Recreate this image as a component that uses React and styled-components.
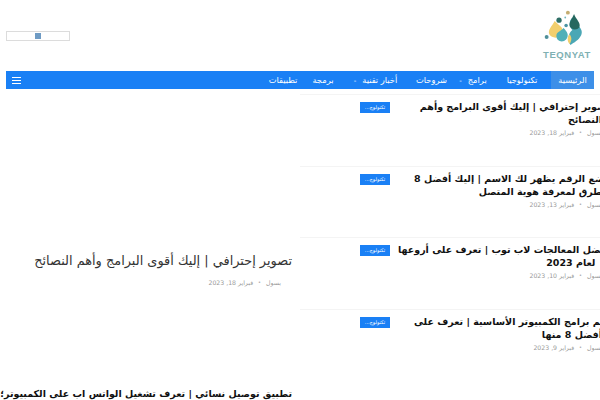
import styled, { createGlobalStyle } from 'styled-components';

const GlobalStyle = createGlobalStyle`
  html, body {
    margin: 0;
    padding: 0;
    background: #fff;
    overflow: hidden;
    width: 600px;
    height: 400px;
  }
  body {
    font-family: "DejaVu Sans", "Liberation Sans", sans-serif;
  }
`;

const navItems = [
  { label: 'الرئيسية', active: true, width: 43 },
  { label: 'تكنولوجيا', width: 58 },
  { label: 'برامج', arrow: true, width: 40 },
  { label: 'شروحات', width: 43 },
  { label: 'أخبار تقنية', arrow: true, width: 69 },
  { label: 'برمجة', width: 36 },
  { label: 'تطبيقات', width: 44 },
];

const posts = [
  { lines: ['تصوير إحترافي | إليك أقوى البرامج وأهم', 'النصائح'], date: 'فبراير 18, 2023' },
  { lines: ['وضع الرقم يظهر لك الاسم | إليك أفضل 8', 'طرق لمعرفة هوية المتصل'], date: 'فبراير 13, 2023' },
  { lines: ['أفضل المعالجات لاب توب | تعرف على أروعها', '\u00a0\u00a0لعام 2023'], date: 'فبراير 10, 2023' },
  { lines: ['أهم برامج الكمبيوتر الأساسية | تعرف على', 'أفضل 8 منها'], date: 'فبراير 9, 2023' },
];

const Logo = () => (
  <LogoBox>
    <svg width="46" height="38" viewBox="0 0 52 42">
      <path d="M12 12 C18 18 24 20 20 27 C17 32 9 32 6 27 C4 22 9 18 12 12Z" fill="#f2cf6d" />
      <path d="M32 8 C34 15 46 20 42 28 C39 34 34 36 30 39 C26 34 27 26 32 22 C28 18 28 12 32 8Z" fill="#4ba7b5" />
      <path d="M34 4 C36 10 42 14 40 19 C37 23 31 22 29 18 C28 13 32 9 34 4Z" fill="#25685f" />
      <path d="M22 20 C26 24 29 28 25 33 C21 37 14 35 14 29 C14 24 19 24 22 20Z" fill="#4fb0b8" />
      <path d="M29 27 C31 30 32 33 29 38 C26 35 26 30 29 27Z" fill="#f2cf6d" />
      <circle cx="17" cy="11" r="3" fill="#2f6f66" />
      <circle cx="27" cy="2.5" r="2.2" fill="#c4ad72" />
      <circle cx="25" cy="17" r="2" fill="#4a93a3" />
      <circle cx="3" cy="30" r="2.2" fill="#4f8f99" />
      <circle cx="24" cy="8" r="1" fill="#6fb6bd" />
    </svg>
    <LogoText>TEQNYAT</LogoText>
  </LogoBox>
);

const Post = ({ lines, date }) => (
  <PostRow>
    <PostBody>
      <PostTitle>
        <FirstLine>{lines[0]}</FirstLine>
        <SecondLine>{lines[1]}</SecondLine>
      </PostTitle>
      <Meta>
        <span>بسول</span>
        <Dot>•</Dot>
        <span>{date}</span>
      </Meta>
    </PostBody>
    <Badge>تكنولوج...</Badge>
  </PostRow>
);

export default function App() {
  return (
    <Page dir="rtl">
      <GlobalStyle />
      <Header>
        <Logo />
        <SearchBox>
          <SearchButton />
        </SearchBox>
      </Header>
      <Nav>
        {navItems.map((item) => (
          <NavItem key={item.label} $active={item.active} $width={item.width}>
            {item.label}
            {item.arrow && <Arrow>-</Arrow>}
          </NavItem>
        ))}
        <Burger>
          <i />
          <i />
          <i />
        </Burger>
      </Nav>
      <Columns>
        <PostList>
          {posts.map((p) => (
            <Post key={p.date} {...p} />
          ))}
        </PostList>
        <Featured>
          <FeaturedItem>
            <FeaturedTitle>تصوير إحترافي | إليك أقوى البرامج وأهم النصائح</FeaturedTitle>
            <Meta $inset>
              <span>بسول</span>
              <Dot>•</Dot>
              <span>فبراير 18, 2023</span>
            </Meta>
          </FeaturedItem>
          <SecondTitle>تطبيق توصيل نسائي | تعرف تشغيل الواتس اب على الكمبيوتر؛ إليك أفضل 5 طرق للتشغيل</SecondTitle>
        </Featured>
      </Columns>
    </Page>
  );
}

const Page = styled.div`
  width: 600px;
  height: 400px;
  overflow: hidden;
  background: #fff;
`;

const Header = styled.header`
  height: 71px;
  padding: 0 8px 0 6px;
  box-sizing: border-box;
  display: flex;
  align-items: flex-start;
  justify-content: space-between;
`;

const LogoBox = styled.div`
  width: 50px;
  margin-top: 10px;
  display: flex;
  flex-direction: column;
  align-items: center;
`;

const LogoText = styled.div`
  direction: ltr;
  font-family: "Liberation Sans", sans-serif;
  font-size: 9.5px;
  line-height: 9px;
  font-weight: 700;
  letter-spacing: 0.6px;
  color: #7fb1b3;
  margin-top: 2px;
`;

const SearchBox = styled.div`
  width: 64px;
  height: 10px;
  margin-top: 31px;
  border: 1px solid #dcdcdc;
  box-sizing: border-box;
  display: flex;
  justify-content: center;
`;

const SearchButton = styled.div`
  width: 6px;
  height: 6px;
  margin-top: 1px;
  background: #6f9bc4;
`;

const Nav = styled.nav`
  margin: 0 6px;
  height: 18px;
  background: #1a80f5;
  display: flex;
  align-items: stretch;
`;

const NavItem = styled.div`
  width: ${(p) => p.$width}px;
  background: ${(p) => (p.$active ? '#3d8fe8' : 'transparent')};
  color: #fff;
  font-size: 8.3px;
  line-height: 18px;
  text-align: center;
  white-space: nowrap;
`;

const Arrow = styled.span`
  font-size: 7px;
  margin-right: 6px;
`;

const Burger = styled.div`
  margin-right: auto;
  margin-left: 6px;
  display: flex;
  flex-direction: column;
  justify-content: center;
  gap: 2px;

  i {
    display: block;
    width: 9px;
    height: 1px;
    background: #fff;
  }
`;

const Columns = styled.main`
  display: flex;
  align-items: flex-start;
  height: 311px;
`;

const PostList = styled.section`
  flex: 0 0 302px;
  margin-right: -2px;
  margin-top: 5px;
`;

const PostRow = styled.article`
  height: 71.6px;
  box-sizing: border-box;
  border-top: 1px solid #f4f4f4;
  padding: 5px 0 0 60px;
  display: flex;
  justify-content: space-between;
  align-items: flex-start;
`;

const PostBody = styled.div`
  width: 204px;
`;

const PostTitle = styled.h3`
  margin: 0;
  font-size: 9.5px;
  line-height: 13px;
  font-weight: 700;
  color: #111;
  white-space: nowrap;
`;

const FirstLine = styled.div`
  margin-right: -8px;
`;

const SecondLine = styled.div`
  white-space: pre;
`;

const Meta = styled.div`
  margin-top: ${(p) => (p.$inset ? '8px' : '2px')};
  margin-right: ${(p) => (p.$inset ? '11px' : '0')};
  display: flex;
  gap: 5px;
  font-size: 6.2px;
  line-height: 9px;
  color: #999;
`;

const Dot = styled.span`
  font-size: 5px;
`;

const Badge = styled.div`
  flex: none;
  width: 30px;
  height: 11px;
  margin-top: 2px;
  background: #1a80f5;
  color: #fff;
  font-size: 5px;
  line-height: 11px;
  text-align: center;
  overflow: hidden;
  white-space: nowrap;
`;

const Featured = styled.section`
  flex: 1;
  padding-right: 8px;
  min-width: 0;
`;

const FeaturedItem = styled.div`
  padding-top: 163px;
`;

const FeaturedTitle = styled.h2`
  margin: 0;
  font-size: 12.9px;
  line-height: 18px;
  font-weight: 400;
  color: #333;
  white-space: nowrap;
`;

const SecondTitle = styled.h3`
  margin: 100px 0 0 -3px;
  font-size: 9.5px;
  line-height: 13px;
  font-weight: 700;
  color: #111;
`;
